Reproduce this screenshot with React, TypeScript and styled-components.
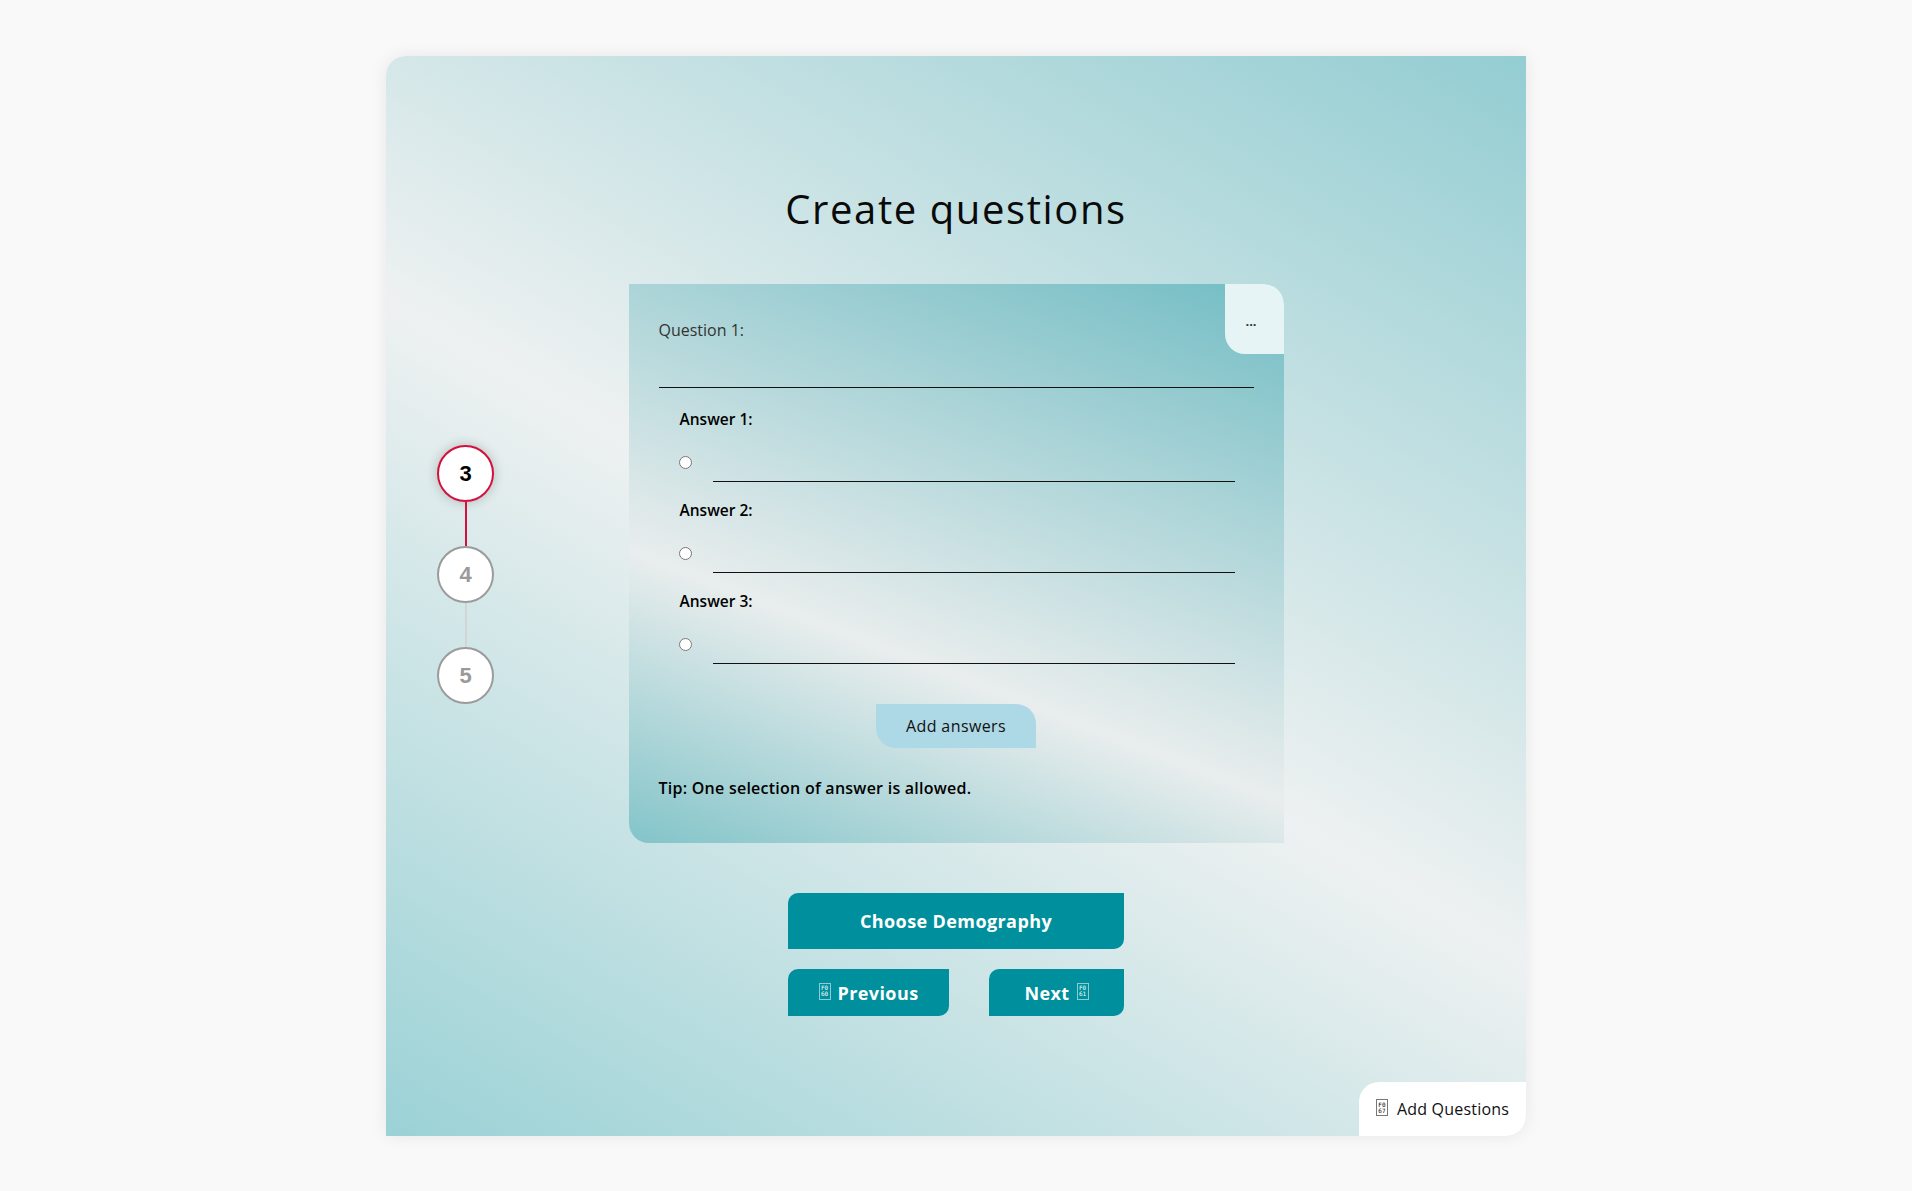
import React from "react";
import styled, { createGlobalStyle } from "styled-components";

const GlobalStyle = createGlobalStyle`
  * { box-sizing: border-box; }
  html, body { margin: 0; padding: 0; }
  body {
    background: #f9f9f9;
    font-family: "Open Sans", "Noto Sans", sans-serif;
    color: #000;
  }
`;

const Page = styled.div`
  padding: 56px 0 55px;
  display: flex;
  justify-content: center;
`;

const Card = styled.section`
  width: 1140px;
  height: 1080px;
  padding-top: 129px;
  display: flex;
  flex-direction: column;
  border-radius: 20px 0 20px 0;
  overflow: hidden;
  background: linear-gradient(30deg, #9bd2d6 0%, #eef1f1 48%, #93cdd2 100%);
  box-shadow: 0 0 18px rgba(0, 0, 0, 0.08);
`;

const Body = styled.div`
  display: grid;
  grid-template-columns: 1fr 655px 1fr;
  align-items: start;
`;

const Stepper = styled.ol`
  list-style: none;
  margin: 260px 0 0;
  padding: 0 0 0 51px;
  display: flex;
  flex-direction: column;
  align-items: flex-start;
`;

const StepItem = styled.li`
  display: flex;
  flex-direction: column;
  align-items: center;
  width: 57px;
`;

const StepCircle = styled.div<{ $active?: boolean }>`
  width: 57px;
  height: 57px;
  border-radius: 50%;
  background: #fff;
  border: 2px solid ${(p) => (p.$active ? "#d4103e" : "#9b9b9b")};
  box-shadow: ${(p) => (p.$active ? "0 0 12px rgba(0,0,0,0.22)" : "none")};
  display: flex;
  align-items: center;
  justify-content: center;
  font-family: "Liberation Sans", Arial, sans-serif;
  font-weight: 700;
  font-size: 22px;
  color: ${(p) => (p.$active ? "#000" : "#9a9a9a")};
`;

const StepLine = styled.div<{ $active?: boolean }>`
  width: 2px;
  height: 44px;
  background: ${(p) => (p.$active ? "#d4103e" : "#d4d4d4")};
`;

const Center = styled.div`
  display: flex;
  flex-direction: column;
  align-items: center;
`;

const Title = styled.h1`
  margin: 0;
  font-size: 40px;
  line-height: 48px;
  font-weight: 400;
  color: #0a0a0a;
  letter-spacing: 1.6px;
`;

const QuestionCard = styled.div`
  position: relative;
  margin-top: 51px;
  width: 655px;
  padding: 36px 30px 45px;
  border-radius: 0 20px;
  background: linear-gradient(21deg, #82c4c9 0%, #e9eded 36%, #72bdc4 100%);
  display: flex;
  flex-direction: column;
`;

const MenuTab = styled.button`
  position: absolute;
  top: 0;
  right: 0;
  width: 59px;
  height: 70px;
  border: none;
  border-radius: 0 20px;
  background: #e6f4f6;
  display: flex;
  align-items: center;
  justify-content: center;
  font-family: "Open Sans", sans-serif;
  font-size: 13px;
  font-weight: 700;
  color: #333;
  padding: 4px 6px 0 0;
`;

const Label = styled.label<{ $strong?: boolean }>`
  display: block;
  font-size: ${(p) => (p.$strong ? 15.5 : 16)}px;
  line-height: 20px;
  font-weight: ${(p) => (p.$strong ? 600 : 400)};
  color: ${(p) => (p.$strong ? "#000" : "#333")};
`;

const LineInput = styled.input`
  display: block;
  width: 100%;
  height: 41px;
  margin-top: 7px;
  border: none;
  border-bottom: 1px solid #111;
  background: transparent;
  outline: none;
  font-family: inherit;
  font-size: 15px;
`;

const Answers = styled.div`
  margin: 21px 19px 0 21px;
  display: flex;
  flex-direction: column;
  gap: 18px;
`;

const AnswerRow = styled.div`
  margin-top: 13px;
  height: 40px;
  display: flex;
  align-items: center;
  gap: 21px;
`;

const Radio = styled.input`
  margin: 0 0 0 -1px;
  width: 13px;
  height: 13px;
  flex: none;
`;

const AnswerInput = styled.input`
  flex: 1;
  align-self: stretch;
  border: none;
  border-bottom: 1px solid #111;
  background: transparent;
  outline: none;
  font-family: inherit;
  font-size: 15px;
`;

const AddAnswers = styled.button`
  align-self: center;
  margin-top: 40px;
  width: 160px;
  height: 44px;
  border: none;
  border-radius: 0 20px;
  background: #add8e6;
  font-family: "Open Sans", sans-serif;
  font-size: 16px;
  letter-spacing: 0.4px;
  color: #111;
`;

const Tip = styled.p`
  margin: 30px 0 0;
  font-size: 16px;
  line-height: 20px;
  font-weight: 600;
  letter-spacing: 0.25px;
  color: #000;
`;

const Actions = styled.div`
  margin-top: 50px;
  width: 336px;
  display: flex;
  flex-direction: column;
  gap: 20px;
`;

const NavRow = styled.div`
  display: flex;
  justify-content: space-between;
`;

const PrimaryButton = styled.button<{ $w?: number; $h?: number }>`
  width: ${(p) => (p.$w ? `${p.$w}px` : "100%")};
  height: ${(p) => p.$h ?? 56}px;
  border: none;
  border-radius: 10px 0;
  background: #008f9c;
  color: #fff;
  font-family: "Open Sans", sans-serif;
  font-weight: 700;
  font-size: 18px;
  letter-spacing: 0.4px;
  display: flex;
  align-items: center;
  justify-content: center;
  gap: 7px;
`;

const Tofu = styled.span<{ $light?: boolean }>`
  display: inline-flex;
  flex-direction: column;
  align-items: center;
  justify-content: center;
  width: 12px;
  height: 17px;
  border: 1px solid ${(p) => (p.$light ? "rgba(255,255,255,0.55)" : "#777")};
  font-family: "DejaVu Sans Mono", "Liberation Mono", monospace;
  font-size: 6px;
  line-height: 6px;
  font-weight: 400;
  letter-spacing: 0;
  color: ${(p) => (p.$light ? "#fff" : "#000")};
  margin-top: -3px;
`;

const CornerTab = styled.button`
  margin-top: auto;
  align-self: flex-end;
  width: 167px;
  height: 54px;
  border: none;
  border-radius: 20px 0;
  background: #fff;
  display: flex;
  align-items: center;
  justify-content: center;
  gap: 9px;
  font-family: "Open Sans", sans-serif;
  font-size: 16px;
  letter-spacing: 0.2px;
  color: #111;
`;

const steps = [
  { n: 3, active: true },
  { n: 4, active: false },
  { n: 5, active: false },
];

function Glyph({ code, light }: { code: string; light?: boolean }) {
  return (
    <Tofu $light={light} aria-hidden="true">
      <span>{code.slice(0, 2)}</span>
      <span>{code.slice(2)}</span>
    </Tofu>
  );
}

export default function App() {
  return (
    <>
      <GlobalStyle />
      <Page>
        <Card>
          <Body>
            <Stepper>
              {steps.map((s, i) => (
                <StepItem key={s.n}>
                  <StepCircle $active={s.active}>{s.n}</StepCircle>
                  {i < steps.length - 1 && <StepLine $active={s.active} />}
                </StepItem>
              ))}
            </Stepper>
            <Center>
              <Title>Create questions</Title>
              <QuestionCard>
                <MenuTab>...</MenuTab>
                <Label>Question 1:</Label>
                <LineInput type="text" />
                <Answers>
                  {[1, 2, 3].map((n) => (
                    <div key={n}>
                      <Label $strong>Answer {n}:</Label>
                      <AnswerRow>
                        <Radio type="radio" name="answer" />
                        <AnswerInput type="text" />
                      </AnswerRow>
                    </div>
                  ))}
                </Answers>
                <AddAnswers>Add answers</AddAnswers>
                <Tip>Tip: One selection of answer is allowed.</Tip>
              </QuestionCard>
              <Actions>
                <PrimaryButton>Choose Demography</PrimaryButton>
                <NavRow>
                  <PrimaryButton $w={161} $h={47}>
                    <Glyph code="F060" light />
                    Previous
                  </PrimaryButton>
                  <PrimaryButton $w={135} $h={47}>
                    Next
                    <Glyph code="F061" light />
                  </PrimaryButton>
                </NavRow>
              </Actions>
            </Center>
            <div />
          </Body>
          <CornerTab>
            <Glyph code="F067" />
            Add Questions
          </CornerTab>
        </Card>
      </Page>
    </>
  );
}
